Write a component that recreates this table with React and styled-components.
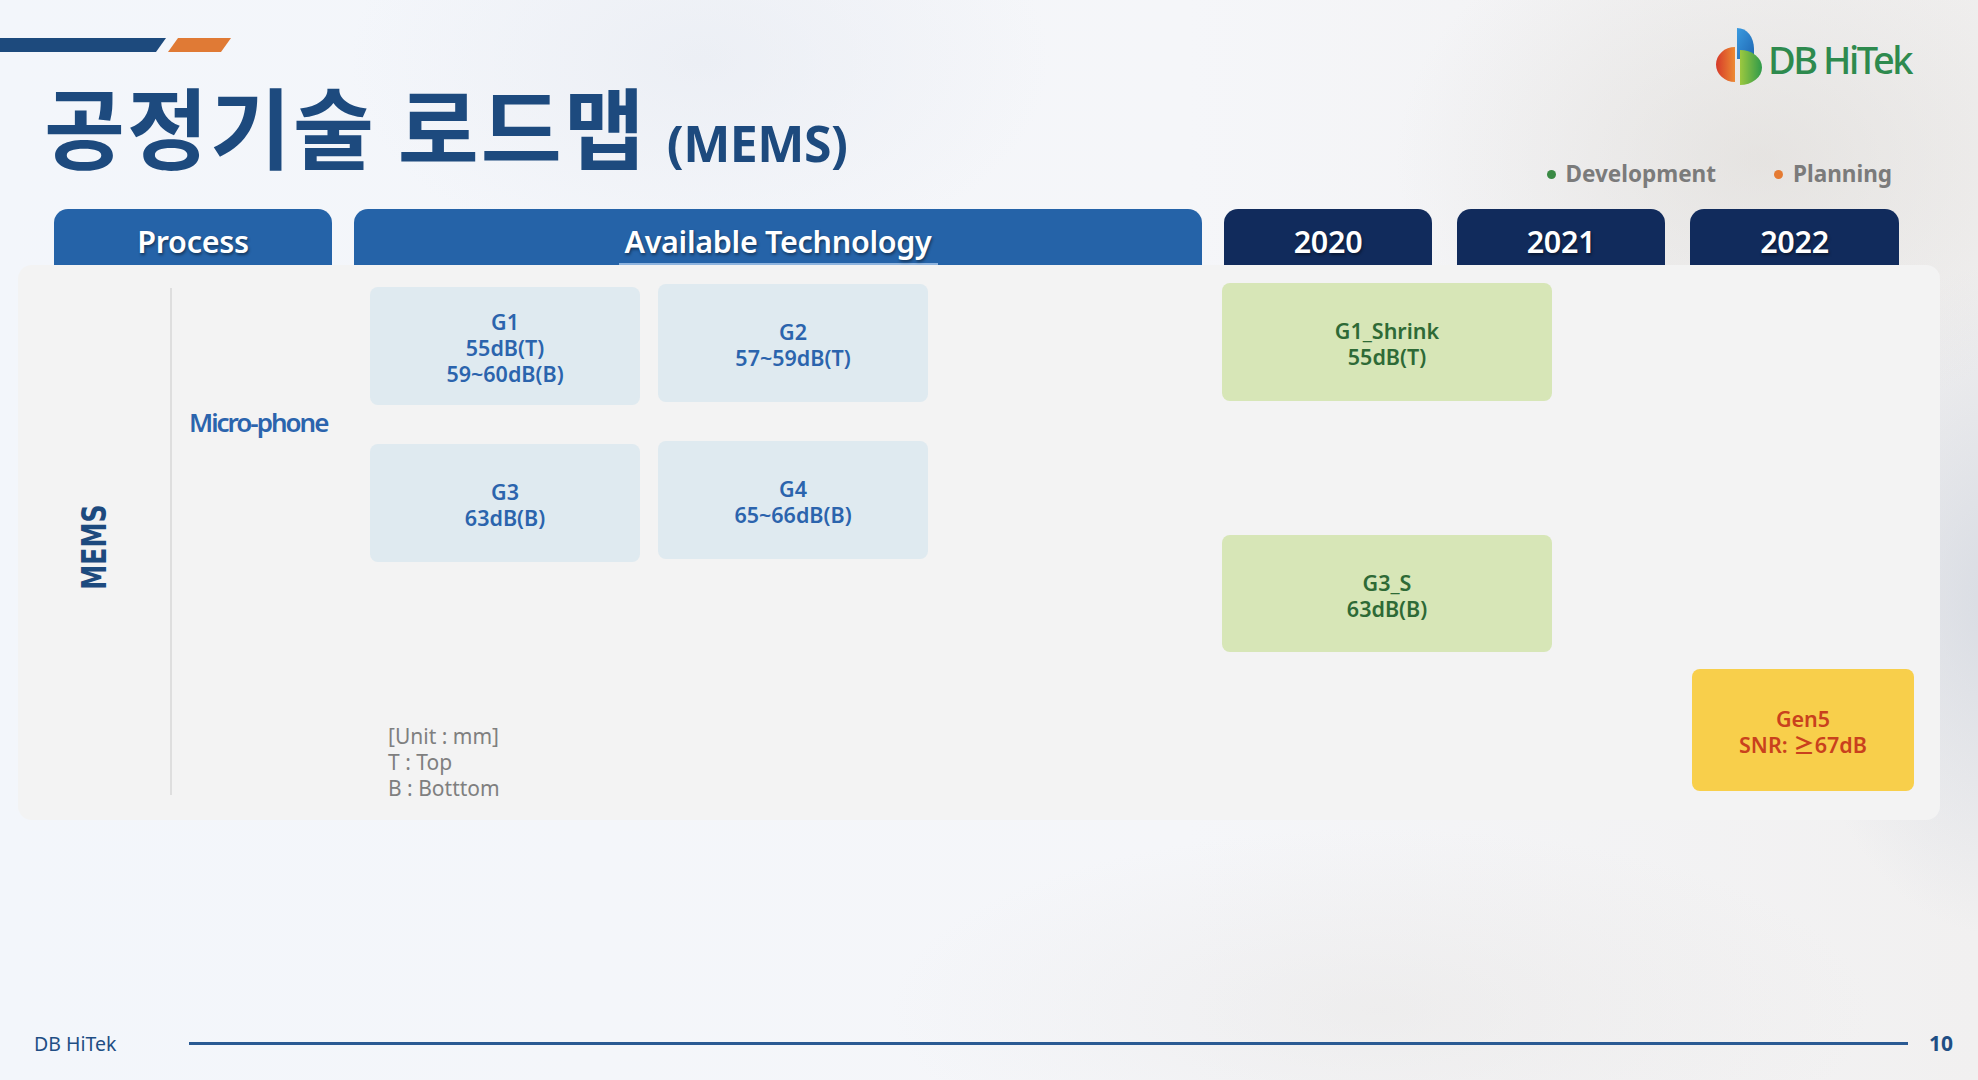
import React from 'react'
import styled, { createGlobalStyle } from 'styled-components'

const GlobalStyle = createGlobalStyle`
  html, body { margin: 0; padding: 0; }
  body { font-family: "Noto Sans", "Noto Sans CJK KR", sans-serif; }
`;

const Page = styled.div`
  width: 1978px;
  height: 1080px;
  display: flex;
  flex-direction: column;
  overflow: hidden;
  background:
    radial-gradient(ellipse 520px 380px at 1760px 160px, rgba(214, 210, 204, 0.45), transparent 70%),
    radial-gradient(ellipse 300px 480px at 2000px 600px, rgba(196, 203, 216, 0.55), transparent 70%),
    radial-gradient(ellipse 700px 260px at 1380px 1010px, rgba(226, 223, 220, 0.35), transparent 70%),
    radial-gradient(ellipse 500px 300px at 700px 60px, rgba(228, 232, 240, 0.5), transparent 70%),
    linear-gradient(90deg, #f3f6fb 0%, #f5f6f9 60%, #f1f0f0 100%);
`;

const Header = styled.header`
  height: 209px;
  display: flex;
  justify-content: space-between;
  padding-right: 67px;
`;

const TitleBlock = styled.div`
  display: flex;
  flex-direction: column;
`;

const Accent = styled.svg`
  margin-top: 38px;
  display: block;
`;

const Title = styled.h1`
  margin: 22px 0 0 44px;
  line-height: 100px;
  font-weight: 700;
  color: #1d4a7e;
  white-space: nowrap;
`;

const TitleKo = styled.span`
  font-family: "Noto Sans CJK KR", sans-serif;
  font-size: 88px;
  letter-spacing: 2px;
`;

const TitleEn = styled.span`
  font-family: "Noto Sans", sans-serif;
  font-size: 50px;
  margin-left: 20px;
  letter-spacing: -0.5px;
`;

const Brand = styled.div`
  display: flex;
  flex-direction: column;
  align-items: flex-end;
`;

const Logo = styled.div`
  margin-top: 27px;
  display: flex;
  align-items: center;
  gap: 2px;
  height: 60px;
`;

const LogoText = styled.span`
  font-size: 38px;
  font-weight: 500;
  letter-spacing: -2.5px;
  color: #2e8a4e;
  line-height: 1;
  margin-top: 4px;
`;

const Legend = styled.div`
  margin-top: 72px;
  margin-right: 19px;
  display: flex;
  gap: 58px;
`;

const LegendItem = styled.span`
  display: flex;
  align-items: center;
  gap: 10px;
  font-size: 22.5px;
  font-weight: 700;
  color: #7b7b7b;
  line-height: 30px;
  &::before {
    content: '';
    width: 9px;
    height: 9px;
    border-radius: 50%;
    background: ${(p) => p.$dot};
  }
`;

const Tabs = styled.div`
  display: flex;
  margin-left: 54px;
  height: 56px;
`;

const Tab = styled.div`
  width: ${(p) => p.$w}px;
  margin-right: ${(p) => p.$gap || 0}px;
  background: ${(p) => (p.$year ? '#112b5c' : '#2563a8')};
  border-radius: 14px 14px 0 0;
  display: flex;
  justify-content: center;
  align-items: flex-end;
`;

const TabLabel = styled.span`
  line-height: 44px;
  padding: 0 6px;
  font-size: 30.5px;
  font-weight: 600;
  color: #fff;
  letter-spacing: -0.3px;
  text-shadow: 1px 2px 3px rgba(0, 0, 0, 0.45);
  border-bottom: 2px solid ${(p) => (p.$line ? '#8fb4de' : 'transparent')};
`;

const Panel = styled.section`
  margin-left: 18px;
  width: 1922px;
  height: 555px;
  background: #f3f3f3;
  border-radius: 14px;
  display: flex;
`;

const ProcessCell = styled.div`
  width: 152px;
  display: flex;
  align-items: center;
  justify-content: center;
  padding-top: 8px;
`;

const ProcessName = styled.span`
  display: block;
  transform: rotate(-90deg) scaleX(0.74);
  font-family: "DejaVu Sans", sans-serif;
  font-size: 34px;
  font-weight: 700;
  color: #1d4a7e;
  white-space: nowrap;
`;

const Divider = styled.div`
  width: 2px;
  margin: 23px 0 25px;
  background: #dedede;
`;

const TechArea = styled.div`
  width: 756px;
  padding-top: 19px;
  display: flex;
  flex-direction: column;
`;

const TechRow = styled.div`
  display: flex;
  align-items: center;
`;

const SubProcess = styled.div`
  width: 181px;
  padding-left: 17px;
  font-size: 26px;
  font-weight: 600;
  letter-spacing: -2px;
  color: #2b64ad;
`;

const BoxGrid = styled.div`
  display: grid;
  grid-template-columns: 270px 270px;
  grid-auto-rows: 118px;
  column-gap: 18px;
  row-gap: 39px;
`;

const palette = {
  tech: { bg: '#dfeaf0', fg: '#2b64ad' },
  dev: { bg: '#d7e6b7', fg: '#2e6a36' },
  plan: { bg: '#f8cf4b', fg: '#c9411d' },
};

const Box = styled.div`
  height: ${(p) => p.$h || 118}px;
  margin-top: ${(p) => p.$top || 0}px;
  border-radius: 8px;
  background: ${(p) => palette[p.$kind].bg};
  color: ${(p) => palette[p.$kind].fg};
  display: flex;
  flex-direction: column;
  align-items: center;
  justify-content: center;
  padding-top: 4px;
  box-sizing: border-box;
  font-size: 21.5px;
  font-weight: 600;
  line-height: 26px;
  text-align: center;
`;

const Note = styled.div`
  margin: 164px 0 0 216px;
  font-size: 21px;
  line-height: 26px;
  color: #7f7f7f;
`;

const YearCol = styled.div`
  margin-left: ${(p) => p.$left}px;
  width: ${(p) => p.$w}px;
  padding-top: ${(p) => p.$top}px;
  display: flex;
  flex-direction: column;
`;

const Footer = styled.footer`
  margin-top: auto;
  margin-bottom: 7px;
  height: 60px;
  display: flex;
  align-items: center;
  padding: 0 25px 0 34px;
`;

const FooterBrand = styled.span`
  width: 155px;
  font-size: 19.5px;
  color: #1f4e84;
`;

const FooterLine = styled.div`
  flex: 1;
  height: 3px;
  background: #2a5a93;
`;

const PageNum = styled.span`
  margin-left: 21px;
  font-size: 21px;
  font-weight: 700;
  color: #1f4e84;
`;

const LogoMark = () => (
  <svg width="52" height="60" viewBox="0 0 52 60">
    <defs>
      <linearGradient id="lgO" x1="0" x2="1" y1="0" y2="0">
        <stop offset="0" stopColor="#d63a2a" />
        <stop offset="1" stopColor="#ec8a32" />
      </linearGradient>
      <linearGradient id="lgB" x1="0" x2="1" y1="0" y2="1">
        <stop offset="0" stopColor="#3a9be0" />
        <stop offset="1" stopColor="#1f66b2" />
      </linearGradient>
      <linearGradient id="lgG" x1="0" x2="1" y1="0" y2="0">
        <stop offset="0" stopColor="#9cc83f" />
        <stop offset="1" stopColor="#2f9a4a" />
      </linearGradient>
    </defs>
    <path d="M21 20 A19 17.5 0 0 0 21 55 Z" fill="url(#lgO)" />
    <path d="M23 1 C33 1 40 10 40 22 L40 32 L23 32 Z" fill="url(#lgB)" />
    <path d="M26 23 A22 17.5 0 0 1 26 58 Z" fill="url(#lgG)" />
  </svg>
);

const tabs = [
  { label: 'Process', w: 278, gap: 22 },
  { label: 'Available Technology', w: 848, gap: 22, line: true },
  { label: '2020', w: 208, gap: 25, year: true },
  { label: '2021', w: 208, gap: 25, year: true },
  { label: '2022', w: 209, year: true },
];

// left column boxes sit a few px lower than the right column ones
const techBoxes = [
  { lines: ['G1', '55dB(T)', '59~60dB(B)'], top: 3 },
  { lines: ['G2', '57~59dB(T)'], top: 0 },
  { lines: ['G3', '63dB(B)'], top: 3 },
  { lines: ['G4', '65~66dB(B)'], top: 0 },
];

const Lines = ({ lines }) => lines.map((l) => <span key={l}>{l}</span>);

export default function App() {
  return (
    <Page>
      <GlobalStyle />
      <Header>
        <TitleBlock>
          <Accent width="240" height="14" viewBox="0 0 240 14">
            <polygon points="0,0 166,0 156,14 0,14" fill="#1d4a7d" />
            <polygon points="178,0 231,0 221,14 168,14" fill="#e07a35" />
          </Accent>
          <Title>
            <TitleKo>공정기술 로드맵</TitleKo>
            <TitleEn>(MEMS)</TitleEn>
          </Title>
        </TitleBlock>
        <Brand>
          <Logo>
            <LogoMark />
            <LogoText>DB HiTek</LogoText>
          </Logo>
          <Legend>
            <LegendItem $dot="#3a8a45">Development</LegendItem>
            <LegendItem $dot="#e57b33">Planning</LegendItem>
          </Legend>
        </Brand>
      </Header>

      <Tabs>
        {tabs.map((t) => (
          <Tab key={t.label} $w={t.w} $gap={t.gap} $year={t.year}>
            <TabLabel $line={t.line}>{t.label}</TabLabel>
          </Tab>
        ))}
      </Tabs>

      <Panel>
        <ProcessCell>
          <ProcessName>MEMS</ProcessName>
        </ProcessCell>
        <Divider />
        <TechArea>
          <TechRow>
            <SubProcess>Micro-phone</SubProcess>
            <BoxGrid>
              {techBoxes.map((b) => (
                <Box key={b.lines[0]} $kind="tech" $top={b.top}>
                  <Lines lines={b.lines} />
                </Box>
              ))}
            </BoxGrid>
          </TechRow>
          <Note>
            [Unit : mm]<br />
            T : Top<br />
            B : Botttom
          </Note>
        </TechArea>
        <YearCol $left={294} $w={330} $top={18}>
          <Box $kind="dev">
            <Lines lines={['G1_Shrink', '55dB(T)']} />
          </Box>
          <Box $kind="dev" $top={134} $h={117}>
            <Lines lines={['G3_S', '63dB(B)']} />
          </Box>
        </YearCol>
        <YearCol $left={140} $w={222} $top={404}>
          <Box $kind="plan" $h={122}>
            <Lines lines={['Gen5', 'SNR: ≥67dB']} />
          </Box>
        </YearCol>
      </Panel>

      <Footer>
        <FooterBrand>DB HiTek</FooterBrand>
        <FooterLine />
        <PageNum>10</PageNum>
      </Footer>
    </Page>
  )
}
